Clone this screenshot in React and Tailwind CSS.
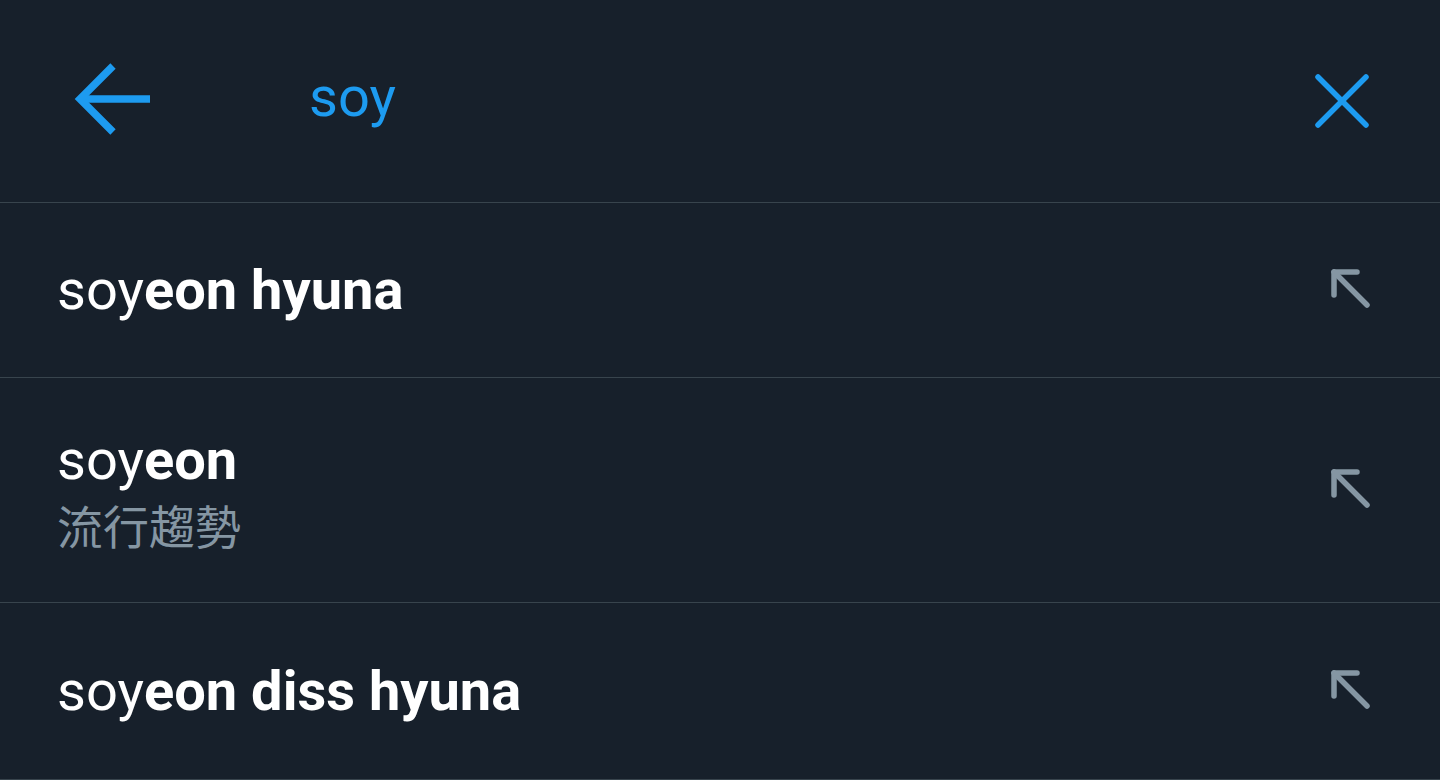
import React from "react";

const ArrowUpLeft = () => (
  <svg width="44" height="44" viewBox="0 0 44 44" fill="none" stroke="#8596a3" strokeWidth="5.5" strokeLinecap="round" strokeLinejoin="round">
    <path d="M4 4 L37 37" />
    <path d="M4 27 L4 4 L27 4" />
  </svg>
);

function Row({ rest, sub, h }) {
  return (
    <div className={`flex items-center justify-between pl-[57px] pr-[66px] border-b border-[#38444d] ${h}`}>
      <div className="flex flex-col">
        <div className="text-[56px] leading-[64px] text-white">
          <span>soy</span>
          <span className="font-bold">{rest}</span>
        </div>
        {sub && (
          <div className="text-[46px] leading-[56px] mt-[4px] text-[#8596a3]" style={{ fontFamily: '"Noto Sans CJK TC", sans-serif' }}>
            {sub}
          </div>
        )}
      </div>
      <ArrowUpLeft />
    </div>
  );
}

export default function App() {
  return (
    <div className="w-[1440px] h-[780px] overflow-hidden bg-[#17202b]" style={{ fontFamily: 'Roboto, "Noto Sans CJK TC", sans-serif' }}>
      <div className="h-[203px] flex items-center border-b border-[#38444d] pl-[72px] pr-[71px]">
        <svg width="80" height="76" viewBox="0 0 80 76" fill="none" stroke="#1d9bf0" strokeWidth="7.5" strokeLinecap="butt" strokeLinejoin="miter">
          <path d="M78 36 L8 36" />
          <path d="M41 3 L8 36 L41 69" />
        </svg>
        <div className="ml-[157px] text-[56px] leading-[64px] text-[#1d9bf0] -mt-[8px]">soy</div>
        <div className="flex-1" />
        <svg width="54" height="54" viewBox="0 0 54 54" fill="none" stroke="#1d9bf0" strokeWidth="5.5" strokeLinecap="round">
          <path d="M3 3 L51 51" />
          <path d="M51 3 L3 51" />
        </svg>
      </div>
      <Row rest="eon hyuna" h="h-[175px]" />
      <Row rest="eon" sub="流行趨勢" h="h-[225px]" />
      <Row rest="eon diss hyuna" h="h-[177px]" />
    </div>
  );
}
